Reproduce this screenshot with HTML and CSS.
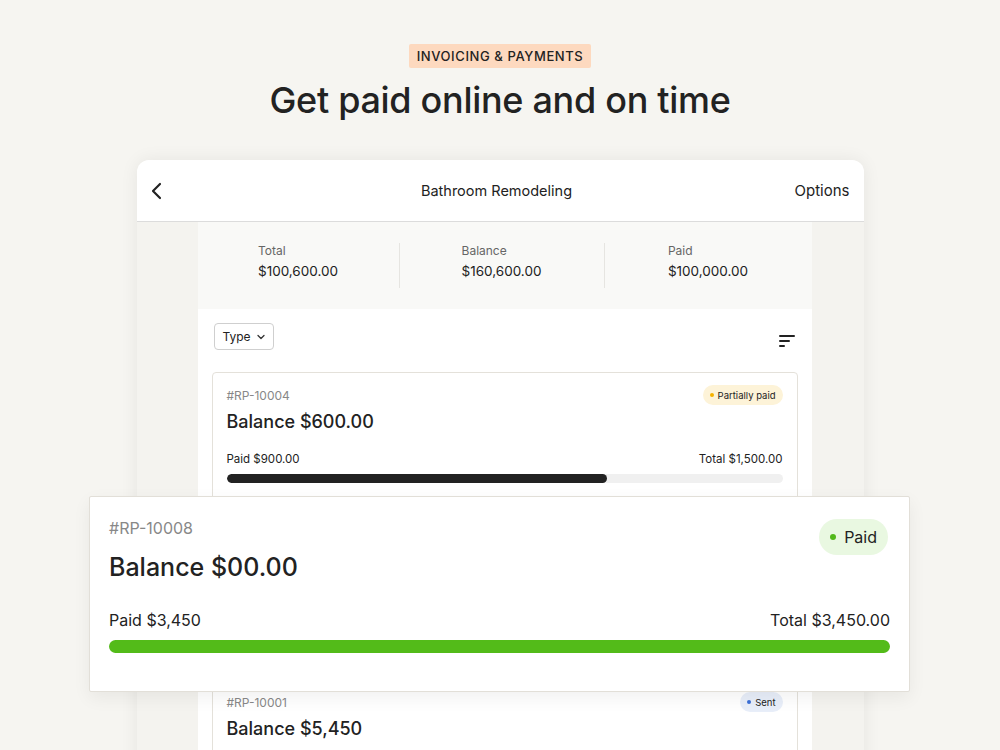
FILE: index.html
```html
<!DOCTYPE html>
<html lang="en">
<head>
    <meta charset="UTF-8">
    <meta name="viewport" content="width=device-width, initial-scale=1.0">
    <title>Invoicing &amp; Payments</title>
    <link rel="stylesheet" href="styles.css">
</head>
<body>
    <div class="hero">
        <span class="tag">Invoicing &amp; Payments</span>
        <h1>Get paid online and on time</h1>
    </div>

    <div class="tablet">
        <div class="topbar">
            <svg class="back" width="14" height="18" viewBox="0 0 14 18">
                <path d="M9 2 L2 9 L9 16" fill="none" stroke="#222" stroke-width="2.2" stroke-linecap="round" stroke-linejoin="round"/>
            </svg>
            <div class="title">Bathroom Remodeling</div>
            <div class="options">Options</div>
        </div>

        <div class="content">
            <div class="summary">
                <div class="stat">
                    <div>
                        <div class="label">Total</div>
                        <div class="value">$100,600.00</div>
                    </div>
                </div>
                <div class="stat">
                    <div>
                        <div class="label">Balance</div>
                        <div class="value">$160,600.00</div>
                    </div>
                </div>
                <div class="stat">
                    <div>
                        <div class="label">Paid</div>
                        <div class="value">$100,000.00</div>
                    </div>
                </div>
            </div>

            <div class="list">
                <div class="toolbar">
                    <div class="select">Type
                        <svg width="8" height="6" viewBox="0 0 8 6"><path d="M1 1.5 L4 4.5 L7 1.5" fill="none" stroke="#333" stroke-width="1.3" stroke-linecap="round" stroke-linejoin="round"/></svg>
                    </div>
                    <svg class="sort" width="18" height="16" viewBox="0 0 18 16">
                        <rect x="1" y="2" width="16" height="2" rx="1" fill="#222"/>
                        <rect x="1" y="7" width="11" height="2" rx="1" fill="#222"/>
                        <rect x="1" y="12" width="6" height="2" rx="1" fill="#222"/>
                    </svg>
                </div>

                <div class="card">
                    <div class="card-head">
                        <span class="ref">#RP-10004</span>
                        <span class="badge partial"><i></i>Partially paid</span>
                    </div>
                    <div class="balance">Balance $600.00</div>
                    <div class="amounts">
                        <span>Paid $900.00</span>
                        <span>Total $1,500.00</span>
                    </div>
                    <div class="bar"><div class="fill" style="width: 68.4%"></div></div>
                </div>

                <!-- sits under the floating card -->
                <div class="card covered"></div>

                <div class="card">
                    <div class="card-head">
                        <span class="ref">#RP-10001</span>
                        <span class="badge sent"><i></i>Sent</span>
                    </div>
                    <div class="balance">Balance $5,450</div>
                    <div class="amounts">
                        <span>Paid $0.00</span>
                        <span>Total $5,450.00</span>
                    </div>
                    <div class="bar"><div class="fill" style="width: 0%"></div></div>
                </div>
            </div>
        </div>
    </div>

    <!-- zoomed-in card floating over the list -->
    <div class="focus-card">
        <div class="card-head">
            <span class="ref">#RP-10008</span>
            <span class="badge paid"><i></i>Paid</span>
        </div>
        <div class="balance">Balance $00.00</div>
        <div class="amounts">
            <span>Paid $3,450</span>
            <span>Total $3,450.00</span>
        </div>
        <div class="bar green"><div class="fill" style="width: 100%"></div></div>
    </div>
</body>
</html>
```

FILE: styles.css
```css
body {
    font-family: Inter, "Noto Sans", sans-serif;
    background-color: #f6f5f1;
    color: #222;
    margin: 0;
    padding: 0;
    height: 750px;
    overflow: hidden;
    position: relative;
}

/* Hero */
.hero {
    display: flex;
    flex-direction: column;
    align-items: center;
    padding-top: 44px;
}

.tag {
    background-color: #fdd9bf;
    padding: 0 8px;
    height: 24px;
    line-height: 24px;
    font-size: 13px;
    font-weight: 500;
    letter-spacing: 0.6px;
    text-transform: uppercase;
    border-radius: 2px;
}

.hero h1 {
    margin: 12px 0 0;
    font-size: 36px;
    font-weight: 500;
    letter-spacing: -0.3px;
    line-height: 40px;
}

/* Tablet frame */
.tablet {
    width: 727px;
    margin: 40px auto 0;
    background-color: #f4f3ef;
    border-radius: 12px 12px 0 0;
    box-shadow: 0 0 18px rgba(0, 0, 0, 0.07);
    overflow: hidden;
    height: 620px;
}

.topbar {
    display: grid;
    grid-template-columns: 1fr auto 1fr;
    align-items: center;
    height: 61px;
    padding: 0 14px;
    background-color: #fff;
    border-bottom: 1px solid #dcdcdc;
}

.topbar .title {
    text-align: center;
    font-size: 14.5px;
    padding-right: 7px;
}

.topbar .options {
    font-size: 15px;
    text-align: right;
}

.content {
    width: 614px;
    margin-left: 61px;
    background-color: #fff;
    height: 100%;
}

/* Summary */
.summary {
    display: grid;
    grid-template-columns: 201px 205px 1fr;
    background-color: #f9f9f7;
    height: 87px;
    align-items: center;
}

.stat {
    display: flex;
    justify-content: center;
    border-left: 1px solid #e6e5e1;
    height: 43px;
    padding-bottom: 2px;
    align-items: flex-start;
}

.stat:first-child {
    border-left: none;
}

.stat .label {
    font-size: 12px;
    color: #666;
    margin-bottom: 5px;
}

.stat .value {
    font-size: 13.5px;
}

/* List */
.list {
    padding: 14px 14px 0;
}

.toolbar {
    display: flex;
    justify-content: space-between;
    align-items: center;
    padding: 0 2px;
    margin-bottom: 22px;
}

.select {
    display: flex;
    align-items: center;
    gap: 6px;
    height: 25px;
    padding: 0 8px;
    border: 1px solid #cfcfcf;
    border-radius: 4px;
    font-size: 12px;
}

.sort {
    margin-top: 8px;
}

.card {
    border: 1px solid #e4e1da;
    border-radius: 4px;
    padding: 12px 14px 0;
    height: 127px;
    margin-bottom: 12.5px;
}

.card.covered {
    visibility: hidden;
}

.card-head {
    display: flex;
    justify-content: space-between;
    align-items: center;
}

.ref {
    font-size: 12px;
    color: #888;
}

.badge {
    display: inline-flex;
    align-items: center;
    gap: 4px;
    height: 20px;
    padding: 0 7px;
    border-radius: 10px;
    font-size: 9.5px;
}

.badge i {
    width: 4px;
    height: 4px;
    border-radius: 50%;
}

.badge.partial {
    background-color: #fdf3d8;
}

.badge.partial i {
    background-color: #f5b300;
}

.badge.paid {
    background-color: #e9f8e1;
}

.badge.paid i {
    background-color: #52b81a;
}

.badge.sent {
    background-color: #e8eef9;
}

.badge.sent i {
    background-color: #3a6fd8;
}

.balance {
    font-size: 18px;
    font-weight: 500;
    margin-top: 6px;
}

.amounts {
    display: flex;
    justify-content: space-between;
    font-size: 11.5px;
    margin-top: 20px;
}

.bar {
    height: 9px;
    background-color: #f0f0f0;
    border-radius: 5px;
    margin-top: 8px;
    overflow: hidden;
}

.bar .fill {
    height: 100%;
    background-color: #222;
    border-radius: 5px;
}

.bar.green .fill {
    background-color: #53bb19;
}

/* Floating card */
.focus-card {
    position: absolute;
    left: 89px;
    top: 496px;
    width: 781px;
    height: 161px;
    padding: 17px 19px 16px 19px;
    background-color: #fff;
    border: 1px solid #e2dfd8;
    border-radius: 2px;
    box-shadow: 0 6px 18px rgba(0, 0, 0, 0.06);
}

.focus-card .card-head {
    align-items: flex-start;
}

.focus-card .ref {
    font-size: 16px;
    margin-top: 4px;
}

.focus-card .badge {
    height: 36px;
    border-radius: 18px;
    padding: 0 11px;
    gap: 8px;
    font-size: 16px;
    margin-top: 5px;
    margin-right: 2px;
}

.focus-card .badge i {
    width: 6px;
    height: 6px;
}

.focus-card .balance {
    font-size: 25px;
    margin-top: -3px;
}

.focus-card .amounts {
    font-size: 16px;
    margin-top: 28px;
}

.focus-card .bar {
    height: 13px;
    border-radius: 7px;
    margin-top: 10px;
}
```
